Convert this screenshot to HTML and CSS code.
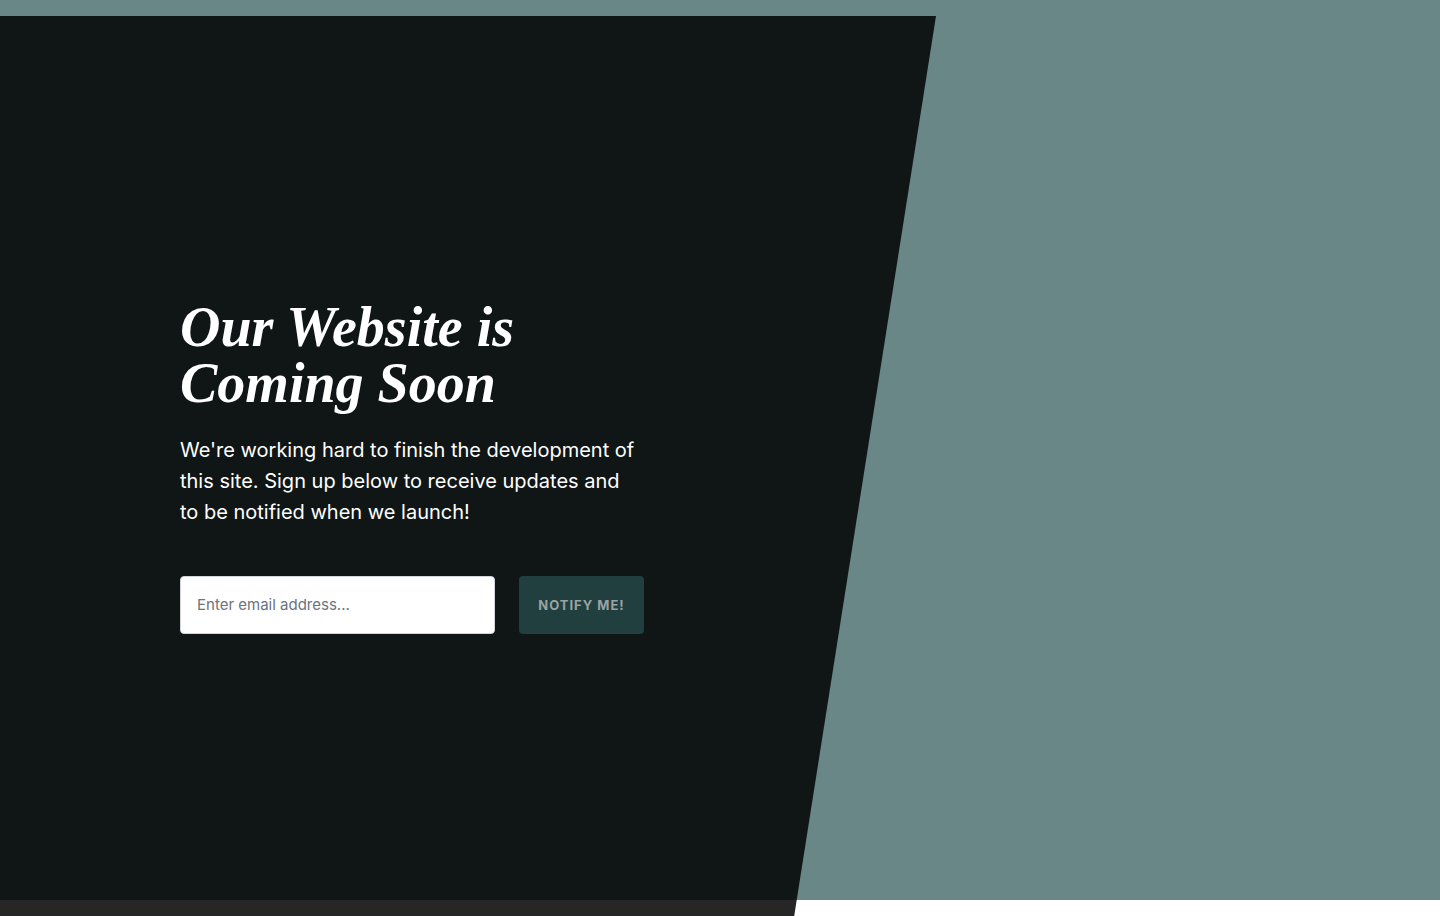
FILE: index.html
```html
<!DOCTYPE html>
<html lang="en">
<head>
<meta charset="utf-8">
<title>Coming Soon</title>
<link rel="stylesheet" href="styles.css">
</head>
<body>
<main class="stage">
  <section class="panel">
    <div class="content">
      <h1 class="title">Our Website is<br>Coming Soon</h1>
      <p class="lead">We're working hard to finish the development of this site. Sign up below to receive updates and to be notified when we launch!</p>
      <form class="signup" onsubmit="return false">
        <input class="email" type="email" placeholder="Enter email address...">
        <button class="notify" type="submit">NOTIFY ME!</button>
      </form>
    </div>
  </section>
</main>
</body>
</html>
```

FILE: styles.css
```css
* { box-sizing: border-box; }
html, body { margin: 0; padding: 0; }
body {
  background: #ffffff;
  font-family: Inter, "Noto Sans", Arial, sans-serif;
  overflow: hidden;
}
.stage {
  height: 916px;
  background: linear-gradient(to bottom, #698786 900px, #ffffff 900px);
  padding-top: 16px;
}
.panel {
  width: 936px;
  height: 900px;
  background: linear-gradient(to bottom, #101616 884px, #262626 884px);
  clip-path: polygon(0 0, 100% 0, 84.85% 100%, 0 100%);
  display: flex;
  align-items: center;
  padding-left: 180px;
}
.content {
  width: 470px;
}
.title {
  margin: 0 0 24px;
  font-family: "Liberation Serif", "Times New Roman", serif;
  font-style: italic;
  font-weight: 700;
  font-size: 56px;
  line-height: 56px;
  color: #ffffff;
}
.lead {
  margin: 0 0 48px;
  font-size: 20px;
  line-height: 31px;
  color: #ffffff;
  max-width: 458px;
}
.signup {
  display: flex;
  gap: 24px;
}
.email {
  width: 315px;
  height: 58px;
  border: 1px solid #d1d5db;
  border-radius: 4px;
  background: #ffffff;
  padding: 0 16px;
  font-family: inherit;
  font-size: 15px;
  color: #111;
  outline: none;
}
.email::placeholder { color: #6b7280; }
.notify {
  width: 125px;
  height: 58px;
  border: none;
  border-radius: 4px;
  background: #213f3f;
  color: #9aa3a3;
  font-family: inherit;
  font-weight: 700;
  font-size: 13px;
  letter-spacing: 1px;
  cursor: pointer;
}
```
